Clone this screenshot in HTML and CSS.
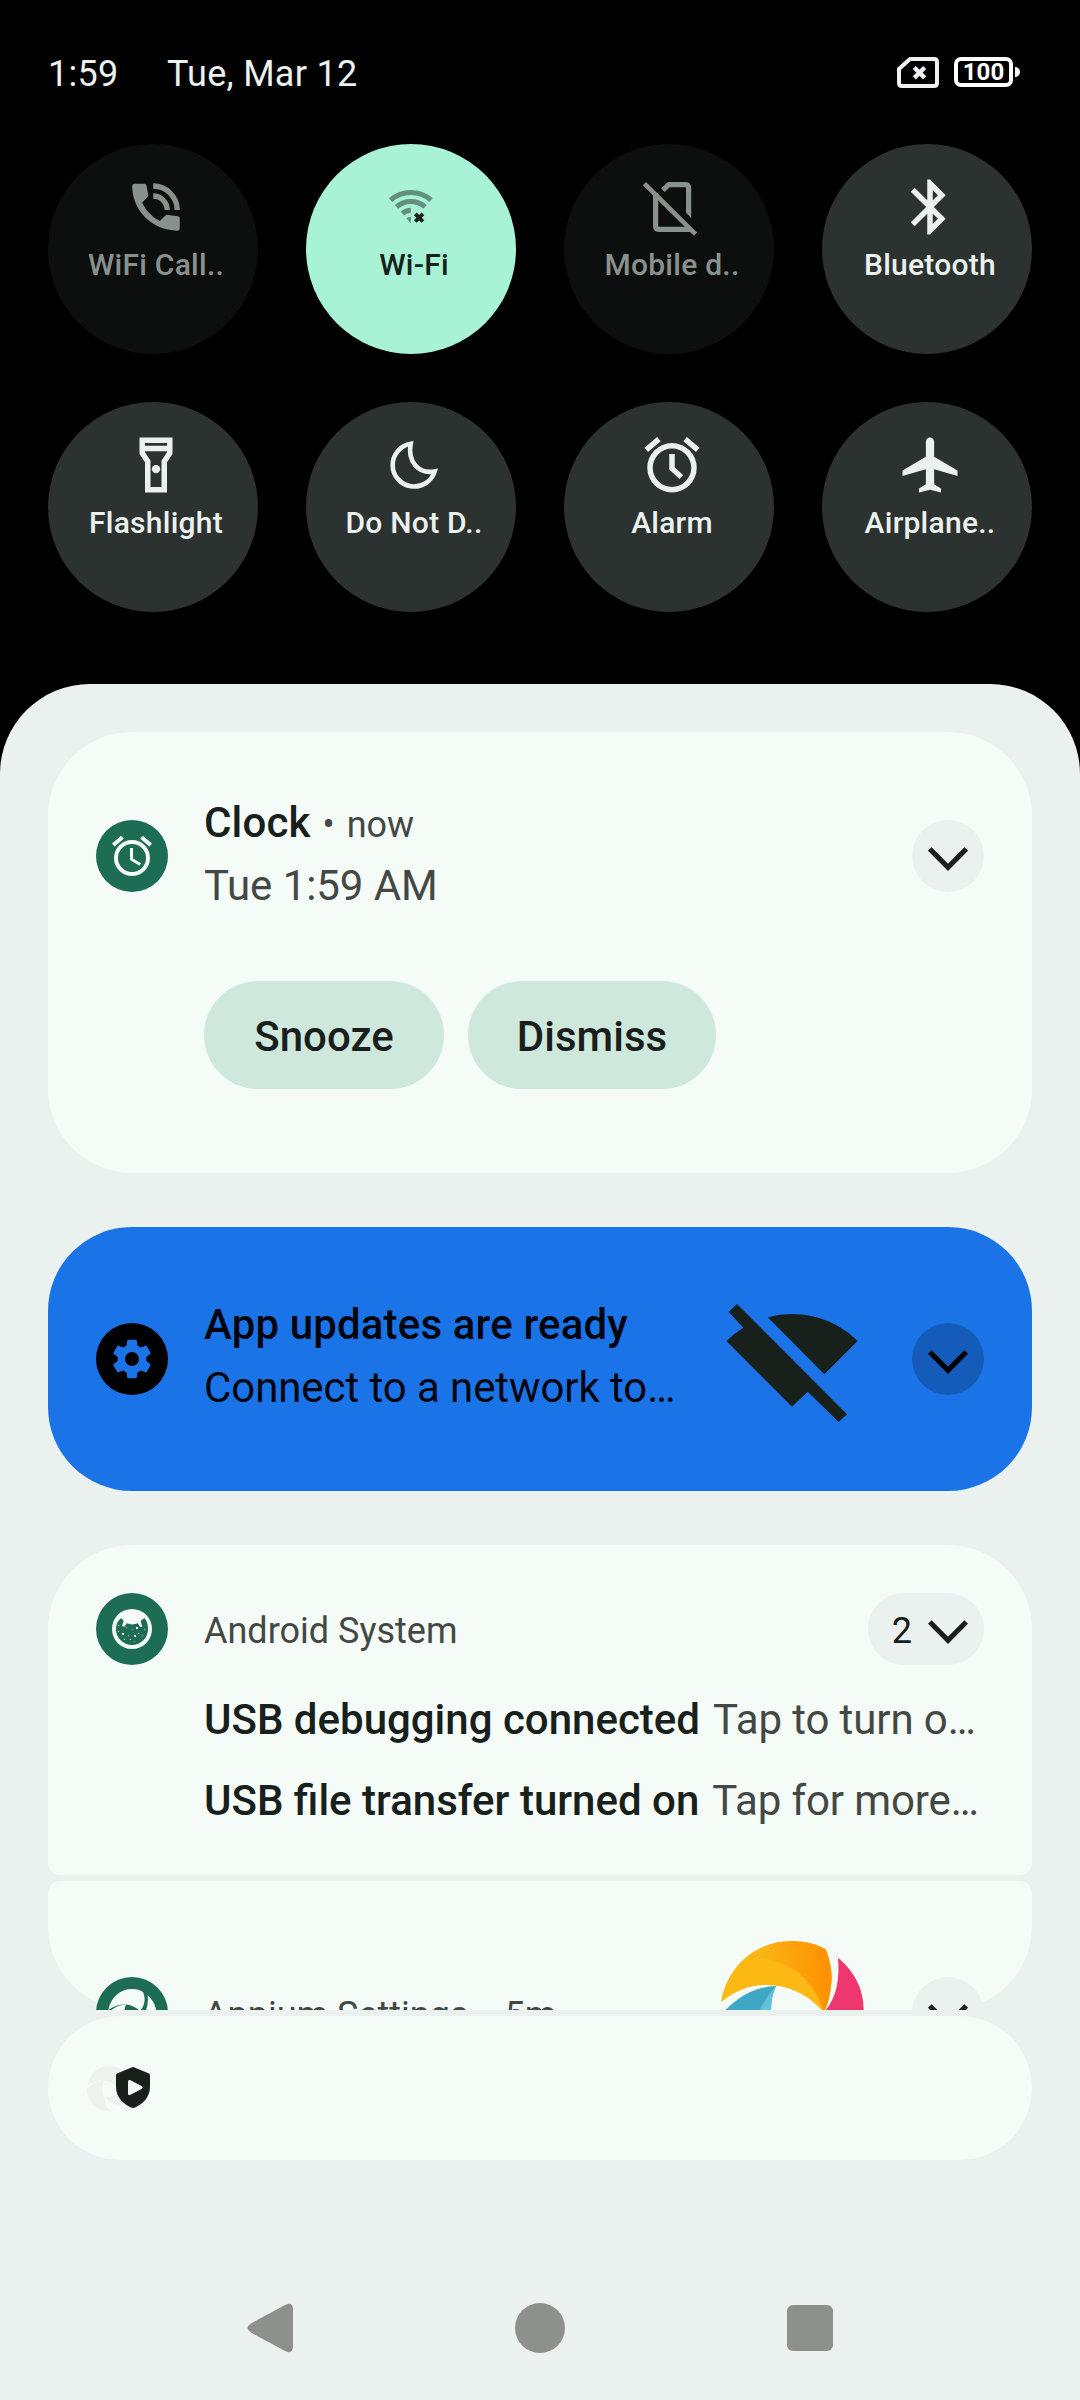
FILE: index.html
```html
<!DOCTYPE html>
<html lang="en">
<head>
<meta charset="utf-8">
<title>Notification shade</title>
<link rel="stylesheet" href="styles.css">
</head>
<body>
<svg class="defs" width="0" height="0" aria-hidden="true">
  <symbol id="chevron" viewBox="0 0 72 72"><path d="M17.8 29L36 47.3 54.2 29" fill="none" stroke="currentColor" stroke-width="5.2"/></symbol>
  <symbol id="appium" viewBox="0 0 48 48">
    <path d="M0.3 21C3 8 12 0 24 0c5 0 8 1 11 3 2.500 6 2.500 12.500-3 19C24 14 12 13 .3 21z"/>
    <path d="M0 24.500C5 18.500 11 16 18 15.500c-3 8-2 16 2 22-1 3 1 7 5 10.300C10 48.500 0 38 0 24.500z"/>
    <path d="M39.500 6C52 17 49.500 33 43 39c-8 4-17 2-23-5 7-.500 14-5 17-10.500C39.500 18 40.500 12 39.500 6z"/>
  </symbol>
</svg>
<main class="screen">
  <header class="status">
    <span class="time">1:59</span>
    <span class="date">Tue, Mar 12</span>
    <svg class="sim" viewBox="0 0 42 31"><path d="M13 2H37q3 0 3 3V26q0 3-3 3H5q-3 0-3-3V12z" fill="none" stroke="#f0f0f2" stroke-width="4"/><path d="M17.300 10.500L27.700 20.900M27.700 10.500L17.300 20.900" stroke="#f0f0f2" stroke-width="4.400"/></svg>
    <span class="battery">100</span><span class="battery-tip"></span>
  </header>

  <section class="tiles">
    <div class="tile off">
      <svg viewBox="0 0 66 66"><path fill="currentColor" d="M9.200 12q0-2.300 2.300-2.300H21.300q2 0 2.200 2L25.400 21.700 19.200 28.700Q25 41 36.800 47L43.300 40.700 54.800 42.300q2 .300 2 2.300V54q0 2.700-2.700 2.700C29 56 9.500 37 9.200 12z"/><path fill="none" stroke="currentColor" stroke-width="5.300" d="M30.200 12A24 24 0 0 1 54.200 36M30.200 22A14 14 0 0 1 44.200 36"/></svg>
      <span>WiFi Call..</span>
    </div>
    <div class="tile on">
      <svg viewBox="0 0 66 66"><g fill="none" stroke="#638f7e" stroke-width="5"><path d="M9.600 26.050A30.800 30.800 0 0 1 50 26.050M15.500 32.800A21.800 21.800 0 0 1 44.100 32.800M21.300 39.500A13 13 0 0 1 29.800 36.300"/></g><path fill="#638f7e" d="M29.800 49.300L25.300 44.300Q27 42.700 29.800 42.700z"/><path stroke="#18201c" stroke-width="3.800" d="M34.300 39.900L41.900 47.500M41.900 39.900L34.300 47.500"/></svg>
      <span>Wi-Fi</span>
    </div>
    <div class="tile off">
      <svg viewBox="0 0 66 66"><g fill="none" stroke="currentColor" stroke-width="5.200"><path d="M24 16.200L29.800 10.700H46.500Q49.600 10.700 49.600 14V39"/><path d="M16.600 19V52Q16.600 55.300 20 55.300H51"/><path stroke-width="4.600" d="M5.400 9.600L56.500 60.200"/></g><path fill="currentColor" d="M47 38.500L52.200 44.300V38z"/></svg>
      <span>Mobile d..</span>
    </div>
    <div class="tile">
      <svg viewBox="0 0 24 24"><path fill="currentColor" d="M17.710 7.710L12 2h-1v7.590L6.410 5 5 6.410 10.590 12 5 17.590 6.410 19 11 14.410V22h1l5.710-5.710-4.300-4.290 4.300-4.290zM13 5.830l1.880 1.880L13 9.590V5.830zm1.880 10.460L13 18.170v-3.760l1.880 1.880z"/></svg>
      <span>Bluetooth</span>
    </div>
    <div class="tile">
      <svg viewBox="0 0 24 24"><path fill="currentColor" fill-rule="evenodd" d="M6 2v6l2 3v11h8V11l2-3V2zM8 4h8v1H8zM8 7h8v.400l-2 3V20h-4v-9.600l-2-3z"/><circle cx="12" cy="13.500" r="1.500" fill="currentColor"/></svg>
      <span>Flashlight</span>
    </div>
    <div class="tile">
      <svg viewBox="0 0 66 66"><path fill="none" stroke="currentColor" stroke-width="4.600" d="M29.700 11.800A21.500 21.500 0 1 0 53.700 39.400C37 42.500 26.500 29 29.700 11.800z"/></svg>
      <span>Do Not D..</span>
    </div>
    <div class="tile">
      <svg viewBox="0 0 24 24"><path fill="currentColor" d="M22 5.720l-4.600-3.860-1.290 1.530 4.600 3.860zM7.880 3.390L6.600 1.860 2 5.710l1.290 1.530zM13 8h-2v5.600l3.700 3.500 1.400-1.400-3.100-2.900zM12 4a9 9 0 1 0 0 18 9 9 0 0 0 0-18zm0 16a7 7 0 1 1 0-14 7 7 0 0 1 0 14z"/></svg>
      <span>Alarm</span>
    </div>
    <div class="tile">
      <svg viewBox="0 0 24 24"><path fill="currentColor" d="M22 16v-2l-8.500-5V3.500c0-.830-.670-1.500-1.500-1.500s-1.500.670-1.500 1.500V9L2 14v2l8.500-2.500V19L8 20.500V22l4-1 4 1v-1.500L13.500 19v-5.500z"/></svg>
      <span>Airplane..</span>
    </div>
  </section>

  <section class="shade">
    <article class="card clock">
      <div class="row">
        <div class="badge"><svg viewBox="0 0 24 24"><path fill="currentColor" d="M22 5.720l-4.600-3.860-1.290 1.530 4.600 3.860zM7.880 3.390L6.600 1.860 2 5.710l1.290 1.530zM12.500 8H11v6l4.750 2.850.750-1.230-4-2.370zM12 4a9 9 0 1 0 0 18 9 9 0 0 0 0-18zm0 16a7 7 0 1 1 0-14 7 7 0 0 1 0 14z"/></svg></div>
        <div class="copy">
          <div class="line title">Clock<small class="meta"><i>•</i>now</small></div>
          <div class="line">Tue 1:59 AM</div>
        </div>
        <div class="expand"><svg><use href="#chevron"/></svg></div>
      </div>
      <div class="actions"><button>Snooze</button><button>Dismiss</button></div>
    </article>

    <article class="card updates">
      <div class="row">
        <div class="badge"><svg viewBox="0 0 24 24"><path fill="currentColor" fill-rule="evenodd" d="M19.140 12.940c.040-.300.060-.610.060-.940 0-.320-.020-.640-.070-.940l2.030-1.580c.180-.140.230-.410.120-.610l-1.920-3.320c-.120-.220-.370-.290-.590-.220l-2.390.960c-.500-.380-1.030-.700-1.620-.940l-.360-2.540c-.040-.240-.240-.410-.480-.410h-3.840c-.240 0-.430.170-.470.410l-.360 2.540c-.590.240-1.130.570-1.620.940l-2.390-.960c-.220-.080-.470 0-.590.220L2.740 8.870c-.120.210-.080.470.120.610l2.030 1.580c-.050.300-.090.630-.090.940s.020.640.070.940l-2.030 1.580c-.180.140-.230.410-.120.610l1.920 3.320c.120.220.370.290.590.220l2.390-.960c.500.380 1.030.700 1.620.940l.360 2.540c.050.240.240.410.480.410h3.840c.240 0 .440-.170.470-.410l.360-2.540c.590-.240 1.130-.560 1.620-.940l2.390.960c.220.080.470 0 .590-.220l1.920-3.320c.120-.220.070-.470-.120-.610zM12 15.500a3.500 3.500 0 1 1 0-7 3.500 3.500 0 0 1 0 7z"/></svg></div>
        <div class="copy">
          <div class="line title">App updates are ready</div>
          <div class="line">Connect to a network to…</div>
        </div>
        <svg class="large" viewBox="180 201 432 432"><path fill="#18201c" d="M206 276L231 252 561 583 536 606 443 515 396 560 199 363A277 277 0 0 1 250 323zM323 292A277 277 0 0 1 593 363L493 463z"/></svg>
        <div class="expand"><svg><use href="#chevron"/></svg></div>
      </div>
    </article>

    <article class="card system">
      <div class="row">
        <div class="badge"><svg viewBox="-4 -4 48 48"><circle cx="20" cy="20" r="20" fill="currentColor"/><path fill="#1c6d54" d="M9.300 9Q4 13 4 20A16 16 0 0 0 36 20Q36 13 32.400 9L28.600 12 30.300 17.700 28 18 25.800 14.300Q20 16.500 14.800 14.300L12.400 17.700 10 17 11.700 12z"/><g fill="currentColor"><path d="M10 24h2v2h-2zM24 18h2v2h-2zM22 26h2v2h-2zM6 22h1v1H6zM14 18h1v1h-1zM20 20h1v1h-1zM32 20h1v1h-1zM16 26h1v1h-1zM12 30h1v1h-1zM18 30h1v1h-1zM26 24h1v1h-1zM30 26h1v1h-1zM22 32h1v1h-1zM6 16h1v1H6z"/></g></svg></div>
        <div class="copy app">Android System</div>
        <div class="expand count"><b>2</b><svg><use href="#chevron"/></svg></div>
      </div>
      <div class="summary"><strong>USB debugging connected</strong><span>Tap to turn o…</span></div>
      <div class="summary"><strong>USB file transfer turned on</strong><span>Tap for more…</span></div>
    </article>

    <article class="card appium">
      <div class="row">
        <div class="badge"><svg class="glyph" viewBox="0 0 48 48"><use href="#appium"/></svg></div>
        <div class="copy app">Appium Settings<i>•</i>5m</div>
        <svg class="large" viewBox="240 243 432 432">
          <defs><linearGradient id="amber" x1="0.15" x2="0.95"><stop offset="0" stop-color="#fbb416"/><stop offset="1" stop-color="#ff9200"/></linearGradient></defs>
          <path fill="#fcb913" d="M243 426C262 316 350 243 455 243C500 243 535 255 557 268C570 300 575 330 575 355C573 395 565 430 555 450L545 450C500 400 440 375 380 375C330 375 290 390 243 426z"/>
          <path fill="url(#amber)" d="M322 292C360 258 410 243 455 243C500 243 535 255 557 268C570 300 575 330 575 355C573 395 565 430 555 450H548C520 350 430 288 322 292z"/>
          <path fill="#3ea7c3" d="M257 450C300 405 350 380 408 378C398 400 393 425 393 450z"/>
          <path fill="#64c1db" d="M408 378C398 400 393 425 393 450H359Q378 410 408 378z"/>
          <path fill="#ee376e" d="M594 293C650 340 671 395 671 450H558C585 415 600 370 594 293z"/>
        </svg>
        <div class="expand"><svg><use href="#chevron"/></svg></div>
      </div>
    </article>

    <div class="shelf">
      <svg class="faint" viewBox="0 0 48 48"><use href="#appium"/></svg>
      <svg class="shield" viewBox="0 0 34 41"><path fill="#18201c" d="M15.500.400Q17 -.200 18.500.400L33 6.500Q34 7 34 8.500V20C34 31 25 38 19 40.500Q17 41.300 15 40.500C9 38 0 31 0 20V8.500Q0 7 1 6.500z"/><path fill="#f5fbf7" d="M12 15Q12 12.300 14.500 13.300L25.500 19Q27.700 20.500 25.500 22L14.500 27.800Q12 29 12 26.500z"/></svg>
    </div>

    <nav class="nav">
      <svg viewBox="-2 0 50 50"><path d="M4 20.500L39 1.500Q45.500-1 46 6V44Q45.500 51 39 48.500L4 29.500Q-3 25 4 20.500z"/></svg>
      <svg viewBox="0 0 50 50"><circle cx="25" cy="25" r="25"/></svg>
      <svg viewBox="0 0 50 50"><rect x="2" y="2" width="46" height="46" rx="6"/></svg>
    </nav>
  </section>
</main>
</body>
</html>
```

FILE: styles.css
```css
* { box-sizing: border-box; }
body { margin: 0; background: #000; font-family: Roboto, "Noto Sans", sans-serif; }
i { font-style: normal; }
svg { display: block; flex: none; }
.defs { position: absolute; }
.screen { width: 1080px; height: 2400px; overflow: hidden; background: #000; display: flex; flex-direction: column; }

.status { height: 144px; padding: 0 60px 0 48px; display: flex; align-items: center; color: #ebf1ee; font-size: 36px; line-height: 42px; }
.time, .date { padding-top: 3px; white-space: nowrap; letter-spacing: 0.28px; }
.time { width: 119px; }
.sim { width: 42px; height: 31px; margin-left: auto; }
.battery { width: 59px; height: 30px; margin-left: 15px; border: 4px solid #fff; border-radius: 7px; color: #fff; font-size: 24px; font-weight: 700; line-height: 22px; text-align: center; }
.battery-tip { width: 5px; height: 10px; margin-left: 2px; border-radius: 0 5px 5px 0; background: #fff; }

.tiles { display: grid; grid-template-columns: repeat(4, 210px); gap: 48px; padding: 0 48px; height: 540px; align-content: start; }
.tile { height: 210px; padding: 30px 0 0 6px; border-radius: 50%; background: #2c322f; color: #ebf1ee; display: flex; flex-direction: column; align-items: center; gap: 7px; font-size: 30px; font-weight: 500; letter-spacing: 0.25px; line-height: 36px; white-space: nowrap; }
.tile svg { width: 66px; height: 66px; }
.tile.off { background: #0d0f0e; color: #89918d; }
.tile.on { background: #a8f2d5; color: #18201c; }

.shade { flex: 1; padding: 48px 48px 0; border-radius: 90px 90px 0 0; background: #ebf1ee; display: flex; flex-direction: column; }
.card { background: #f5fbf7; border-radius: 84px; padding: 0 48px; color: #434844; font-size: 42px; }
.row { display: flex; align-items: center; }
.badge { width: 72px; height: 72px; margin-right: 36px; flex: none; border-radius: 50%; background: #1c6d54; color: #f5fbf7; display: grid; place-items: center; }
.badge svg { width: 48px; height: 48px; }
.badge .glyph { fill: #f5fbf7; }
.copy { flex: 1; min-width: 0; white-space: nowrap; }
.line { line-height: 63px; height: 63px; letter-spacing: -0.08px; }
.title { font-weight: 500; color: #18201c; letter-spacing: 0.15px; }
.meta { font-size: 36px; font-weight: 400; color: #434844; letter-spacing: 0; }
.meta i { margin: 0 12px; }
.expand { width: 72px; height: 72px; flex: none; border-radius: 36px; background: #ebf1ee; color: #18201c; }
.expand svg { width: 72px; height: 72px; }
.large { width: 144px; height: 144px; margin-right: 48px; }

.clock { height: 441px; padding-top: 61px; }
.clock .row { height: 126px; }
.clock .copy { padding-bottom: 4px; }
.actions { display: flex; gap: 24px; margin: 62px 0 0 108px; }
button { height: 108px; width: 240px; padding: 2px 0 0; border: 0; border-radius: 54px; background: #cfe8dc; color: #1a1e1c; font: 500 42px Roboto, sans-serif; }
button + button { width: 248px; }

.updates { height: 264px; margin-top: 54px; background: #1b73e8; color: #02060c; display: grid; align-items: center; }
.updates .copy { padding-bottom: 6px; }
.updates .title { color: #02060c; }
.updates .badge { background: #000; color: #1b73e8; }
.updates .expand { background: #155cba; color: #000; }

.system { height: 330px; margin-top: 54px; padding-top: 48px; border-radius: 84px 84px 12px 12px; }
.app { font-size: 36px; line-height: 42px; padding-top: 3px; }
.count { width: 116px; display: flex; align-items: center; justify-content: flex-end; }
.count b { font-size: 36px; font-weight: 400; line-height: 42px; padding-top: 3px; }
.summary { margin-left: 108px; height: 81px; line-height: 81px; white-space: nowrap; display: flex; gap: 13px; }
.summary strong { font-weight: 500; color: #18201c; }
.summary span { letter-spacing: -0.1px; }
.row + .summary { margin-top: 14px; }

.appium { height: 129px; margin-top: 6px; padding-top: 60px; border-radius: 12px 12px 84px 84px; clip-path: inset(0); }
.app i { display: inline-block; margin: 0 12px; transform: translateY(4px); }

.shelf { height: 144px; margin-top: 6px; padding: 0 39px; border-radius: 72px; background: #f5fbf7; display: flex; align-items: center; }
.faint { width: 45px; height: 45px; fill: #edf2ef; }
.shield { width: 34px; height: 41px; margin: -1px 0 0 -16px; }

.nav { height: 50px; margin: 143px 0 0; padding: 0 197px; display: flex; justify-content: space-between; fill: #8e908d; }
.nav svg { width: 50px; height: 50px; }
```
